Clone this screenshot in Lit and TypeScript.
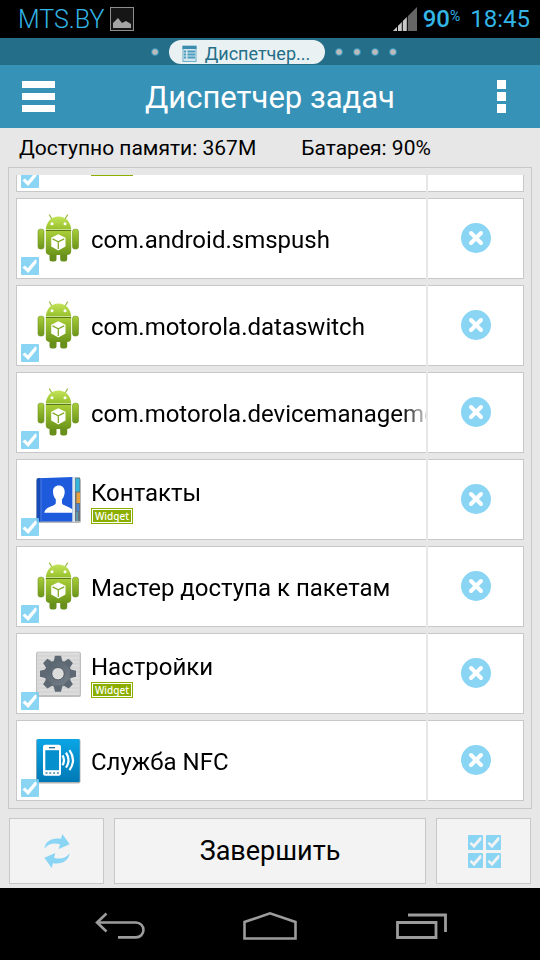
import { LitElement, html, css, svg, nothing } from "lit";
import { customElement, property, state } from "lit/decorators.js";

type IconName = "android" | "contacts" | "settings" | "nfc" | "none";

interface Task {
  name: string;
  icon: IconName;
  widget?: boolean;
}

const TASKS: Task[] = [
  { name: "", icon: "none", widget: true },
  { name: "com.android.smspush", icon: "android" },
  { name: "com.motorola.dataswitch", icon: "android" },
  { name: "com.motorola.devicemanagement", icon: "android" },
  { name: "Контакты", icon: "contacts", widget: true },
  { name: "Мастер доступа к пакетам", icon: "android" },
  { name: "Настройки", icon: "settings", widget: true },
  { name: "Служба NFC", icon: "nfc" },
];

const android = svg`
  <defs>
    <linearGradient id="g" x1="0" y1="0" x2="0" y2="1">
      <stop offset="0" stop-color="#a9ce38"/><stop offset="1" stop-color="#6c951a"/>
    </linearGradient>
    <linearGradient id="h" x1="0" y1="0" x2="0" y2="1">
      <stop offset="0" stop-color="#c3e45a"/><stop offset="1" stop-color="#96c02a"/>
    </linearGradient>
  </defs>
  <path d="M15.5 1l3 5M33.500 1l-3 5" stroke="#98b944" stroke-width="1.3" stroke-linecap="round"/>
  <path d="M11.8 15.6C12.3 7.5 17.5 2.4 24.5 2.4S36.7 7.5 37.2 15.6Z" fill="url(#h)"/>
  <circle cx="18" cy="9.8" r="1.5" fill="#fff"/><circle cx="31" cy="9.8" r="1.5" fill="#fff"/>
  <rect x="15.5" y="37" width="7" height="10.5" rx="2.5" fill="#688e1b"/>
  <rect x="26.2" y="37" width="7" height="10.5" rx="2.5" fill="#688e1b"/>
  <rect x="4" y="15.2" width="6" height="19.8" rx="2.2" fill="url(#g)" stroke="#6c9120" stroke-width=".6"/>
  <rect x="38.5" y="15.2" width="6" height="19.8" rx="2.2" fill="url(#g)" stroke="#6c9120" stroke-width=".6"/>
  <path d="M11.8 17H37.2V37Q37.2 41 33 41H16Q11.8 41 11.8 37Z" fill="url(#g)"/>
  <path d="M11.8 16.5H37.2" stroke="#587a12" stroke-width="1"/>
  <path d="M24.3 20.3L31.5 23.8V32.5L24.3 36.5L17.2 32.5V23.8Z" fill="#fff"/>
  <path d="M18.5 24.8L24.3 27.8L30.2 24.8M24.3 27.8V35" fill="none" stroke="#84aa28" stroke-width="1.3"/>`;

const contacts = svg`
  <rect x="2" y="3" width="45" height="45" rx="2" fill="#000" opacity=".28"/>
  <rect x="40" y="2.5" width="6" height="43.5" fill="#66717c"/>
  <rect x="41.5" y="3.5" width="4" height="13" fill="#35b5dc"/>
  <rect x="42.5" y="17.5" width="3.5" height="10.5" fill="#e8a13c"/>
  <rect x="42.5" y="29" width="2.5" height="7" fill="#4c86d8"/>
  <path d="M43 37v9" stroke="#5ec3e0" stroke-width="1"/>
  <rect x="38" y="1.8" width="3" height="45" fill="#dfe6ea"/>
  <path d="M4.5 3.3L38.3 2V46.5H4.5Q2.7 46.5 2.7 44.7V5.2Q2.7 3.3 4.5 3.3Z" fill="#1d5bdc"/>
  <path d="M2.9 5Q3 3.5 4.5 3.3H6.5V46.5H4.5Q3 46.5 2.9 45Z" fill="#164bb8"/>
  <path d="M7 3.5V46.3" stroke="#5c8bea" stroke-width=".7"/>
  <path d="M24.8 10.6C21 10.6 18.8 13.3 19 17C19.2 20.5 20.3 22.5 21.8 24.3V28.2C20.5 31.5 11 31.5 10.3 37.8H38.3V34.5C36 31.5 29 30.8 28 28.2V24.3C29.5 22.5 30.6 20.5 30.7 17C30.8 13.3 28.5 10.6 24.8 10.6Z" fill="#fff"/>`;

const settings = svg`
  <defs><linearGradient id="s" x1="0" y1="0" x2="1" y2="1">
    <stop offset="0" stop-color="#53606c"/><stop offset="1" stop-color="#78818b"/>
  </linearGradient></defs>
  <rect x="2" y="3" width="45" height="45" rx="2" fill="#000" opacity=".25"/>
  <rect x="2.7" y="3" width="43.5" height="43.5" rx="1.5" fill="#dcdcdc" stroke="#b5b5b5" stroke-width=".6"/>
  <path d="M3 7h43M3 11h43M3 15h43M3 19h43M3 23h43M3 27h43M3 31h43M3 35h43M3 39h43M3 43h43" stroke="#cfcfcf" stroke-width="1"/>
  <g fill="url(#s)">
    <circle cx="24" cy="24.7" r="13.5"/>
    ${[0, 45, 90, 135, 180, 225, 270, 315].map(
      (a) => svg`<path d="M19.5 13L21 6.7H27L28.5 13Z" fill="#5d6873" transform="rotate(${a} 24 24.7)"/>`
    )}
  </g>
  <circle cx="24" cy="24.7" r="6.2" fill="#dcdcdc" stroke="#464e58" stroke-width=".8"/>`;

const nfc = svg`
  <defs><linearGradient id="n" x1="0" y1="0" x2="0" y2="1">
    <stop offset="0" stop-color="#0aa5e6"/><stop offset="1" stop-color="#0079b5"/>
  </linearGradient></defs>
  <rect x="2" y="3" width="44.5" height="44.5" rx="2" fill="#000" opacity=".3"/>
  <rect x="2.7" y="3" width="43" height="43" rx="1.5" fill="url(#n)"/>
  <rect x="9" y="8.7" width="18" height="31" rx="2.2" fill="#fff"/>
  <rect x="11.3" y="14.2" width="13.7" height="20" fill="#0590cd"/>
  <path d="M15 11.7h6" stroke="#0a5f8a" stroke-width="1.2"/>
  <path d="M11.5 37h13.5" stroke="#4a88a8" stroke-width="1.5" stroke-dasharray="2 1.8"/>
  <path d="M28.5 19.4Q31.5 24.2 28.5 29.2M32 16.7Q37 24.2 32 31.7M35.5 14.2Q42.5 24.2 35.5 34.2" fill="none" stroke="#fff" stroke-width="2.2"/>`;

const ICONS = { android, contacts, settings, nfc, none: nothing };

@customElement("task-row")
export class TaskRow extends LitElement {
  @property({ attribute: false }) task!: Task;

  static styles = css`
    :host {
      display: grid;
      grid-template-columns: 1fr 2px 96px;
      flex: none;
      height: 81px;
    }
    .main {
      position: relative;
      display: flex;
      align-items: center;
      min-width: 0;
      box-sizing: border-box;
      padding: 0 0 2px 17px;
      border: 1px solid #c8c8c8;
      border-right: none;
      background: #fff;
    }
    .icon {
      flex: none;
      width: 48px;
      height: 48px;
      margin-right: 9px;
    }
    .text {
      flex: 1;
      min-width: 0;
      padding-top: 6px;
      cursor: pointer;
    }
    .name {
      display: block;
      min-height: 29px;
      overflow: hidden;
      font-size: 24px;
      line-height: 29px;
      white-space: nowrap;
      mask-image: linear-gradient(to left, rgba(0, 0, 0, 0.2), #000 24px);
    }
    .badge {
      display: block;
      box-sizing: border-box;
      width: 42px;
      height: 16px;
      border: 1px solid #8bae00;
      outline: 1px solid #fff;
      outline-offset: -2px;
      background: #8bae00;
      color: #fff;
      font: 500 10px/14px "Noto Sans", sans-serif;
      text-align: center;
    }
    .check {
      position: absolute;
      left: 4px;
      bottom: 3px;
      width: 18px;
      height: 18px;
      margin: 0;
      appearance: none;
      border-radius: 1px;
      background: rgba(119, 206, 242, 0.86);
    }
    .check:checked::before {
      content: "";
      display: block;
      width: 18px;
      height: 18px;
      background: #fff;
      clip-path: polygon(8% 58%, 22% 47%, 37% 62%, 79% 14%, 86% 16%, 86% 34%, 40% 89%);
    }
    .close {
      display: flex;
      align-items: center;
      justify-content: center;
      padding: 0 0 2px;
      border: 1px solid #c8c8c8;
      border-left: none;
      background: #fff;
    }
  `;

  render() {
    const { name, icon, widget } = this.task;
    return html`
      <div class="main">
        <svg class="icon" viewBox="0 0 48 48" fill="none">${ICONS[icon]}</svg>
        <label class="text" for="check">
          <span class="name">${name}</span>
          ${widget ? html`<span class="badge">Widget</span>` : nothing}
        </label>
        <input class="check" id="check" type="checkbox" checked />
      </div>
      <span></span>
      <button class="close" aria-label="Закрыть">
        <svg width="30" height="30" viewBox="0 0 30 30">
          <circle cx="15" cy="15" r="15" fill="#8ad5f4" />
          <path d="M10 10l10 10M20 10l-10 10" stroke="#fff" stroke-width="4" stroke-linecap="round" />
        </svg>
      </button>
    `;
  }
}

@customElement("app-root")
export class AppRoot extends LitElement {
  @state() private tasks = TASKS;

  static styles = css`
    :host {
      display: flex;
      flex-direction: column;
      height: 100vh;
      background: #e7e7e7;
      color: #000;
      font-family: Roboto, sans-serif;
    }
    button {
      padding: 0;
      border: none;
      background: none;
      color: inherit;
      font-family: inherit;
    }
    svg {
      display: block;
    }
    .status {
      display: flex;
      flex: none;
      align-items: center;
      height: 38px;
      padding: 0 10px 0 18px;
      background: #000;
      color: #33b5e5;
      font-size: 24px;
    }
    .carrier {
      margin-right: auto;
      display: flex;
      align-items: center;
      gap: 6px;
      font-size: 25px;
      font-weight: 300;
    }
    .percent {
      display: flex;
      align-items: center;
      margin: 0 10px 0 6px;
      font-weight: 500;
    }
    .percent small {
      margin-bottom: 6px;
      font-size: 14px;
      font-weight: 400;
    }
    .tabs {
      display: flex;
      flex: none;
      align-items: center;
      justify-content: center;
      gap: 10px;
      height: 27px;
      padding-left: 8px;
      background: #246e89;
    }
    .dot {
      box-sizing: border-box;
      width: 8px;
      height: 8px;
      border: 1px solid #2592bd;
      border-radius: 50%;
      background: #bbb;
    }
    .pill {
      display: flex;
      align-items: center;
      justify-content: center;
      gap: 8px;
      box-sizing: border-box;
      width: 156px;
      height: 24px;
      padding: 3px 2px 0 0;
      border-radius: 12px;
      background: #e9f1f3;
      color: #246e89;
      font-size: 18px;
      line-height: 21px;
    }
    .header {
      display: grid;
      flex: none;
      grid-template-columns: 1fr auto 1fr;
      align-items: center;
      height: 63px;
      padding: 0 34px 0 22px;
      background: #3792b7;
      color: #fff;
    }
    .more {
      justify-self: end;
    }
    .title {
      margin: 0;
      padding: 2px 0 0 12px;
      font-size: 31px;
      font-weight: 400;
    }
    .info {
      display: flex;
      flex: none;
      align-items: center;
      gap: 45px;
      height: 39px;
      padding: 0 19px;
      font-size: 21px;
    }
    .frame {
      display: flex;
      flex: 1;
      min-height: 0;
      margin: 0 8px;
      padding: 7px;
      border: 1px solid #c8c8c8;
    }
    .list {
      display: flex;
      flex: 1;
      flex-direction: column;
      justify-content: flex-end;
      gap: 6px;
      min-width: 0;
      overflow: hidden;
    }
    .actions {
      display: grid;
      flex: none;
      grid-template-columns: 95px 1fr 95px;
      gap: 10px;
      height: 66px;
      padding: 9px 9px 4px;
    }
    .action {
      display: flex;
      align-items: center;
      justify-content: center;
      border: 1px solid #c8c8c8;
      background: #f3f3f3;
      font-size: 27px;
      line-height: 34px;
    }
    .nav {
      display: grid;
      flex: none;
      grid-template-columns: repeat(3, 1fr);
      height: 72px;
      padding: 0 45px;
      background: #000;
    }
    .key {
      display: flex;
      align-items: center;
      justify-content: center;
      padding-top: 3px;
    }
  `;

  render() {
    return html`
      <div class="status">
        <span class="carrier">MTS.BY
          <svg width="24" height="24" viewBox="0 0 24 24">
            <rect x="0.5" y="0.5" width="23" height="23" fill="#161616" stroke="#8e8e8e" />
            <path d="M3 21V16L8 11L12 16L16 14L21 17V21Z" fill="#a5a5a5" />
          </svg>
        </span>
        <svg width="24" height="24" viewBox="0 0 24 24">
          <path d="M0 24L24 0V24Z" fill="#666" />
          <path d="M0 24L14 10V24Z" fill="#c8c8c8" />
          <path d="M4.5 18v6M9.3 13v11M14.3 8v16" stroke="#000" stroke-width="1" />
        </svg>
        <span class="percent">90<small>%</small></span>
        <span>18:45</span>
      </div>

      <div class="tabs">
        <span class="dot"></span>
        <span class="pill">
          <svg width="15" height="17" viewBox="0 0 15 17">
            <rect x="1" y="1" width="13" height="15.5" fill="#d3e6ee" stroke="#6db0ca" />
            <path d="M.5 2.5h14" stroke="#3b8db0" stroke-width="3" />
            <path d="M2 6.5h2M2 9.5h2M2 12.5h2M5.5 6.5h7.5M5.5 9.5h7.5M5.5 12.5h7.5" stroke="#4a9bbc" stroke-width="2" />
          </svg>
          Диспетчер...
        </span>
        ${[1, 2, 3, 4].map(() => html`<span class="dot"></span>`)}
      </div>

      <header class="header">
        <button aria-label="Меню">
          <svg width="33" height="31" viewBox="0 0 33 31" fill="#fff">
            <path d="M0 0h33v7H0zM0 12h33v7H0zM0 24h33v7H0z" />
          </svg>
        </button>
        <h1 class="title">Диспетчер задач</h1>
        <button class="more" aria-label="Ещё">
          <svg width="9" height="33" viewBox="0 0 9 33" fill="#fff">
            <path d="M0 0h9v9H0zM0 12h9v9H0zM0 24h9v9H0z" />
          </svg>
        </button>
      </header>

      <div class="info"><span>Доступно памяти: 367M</span><span>Батарея: 90%</span></div>

      <main class="frame">
        <div class="list">${this.tasks.map((t) => html`<task-row .task=${t}></task-row>`)}</div>
      </main>

      <div class="actions">
        <button class="action" aria-label="Обновить">
          <svg width="26" height="34" viewBox="0 0 26 34" fill="#8ad5f4">
            <path d="M.3 14.7C1.5 7 8 3.3 17 4.8L18.3 0L25.7 10.3L14.7 15L16 10.3C10 8.3 4 9.5 .3 14.7Z" />
            <path transform="rotate(180 13 17)" d="M.3 14.7C1.5 7 8 3.3 17 4.8L18.3 0L25.7 10.3L14.7 15L16 10.3C10 8.3 4 9.5 .3 14.7Z" />
          </svg>
        </button>
        <button class="action">Завершить</button>
        <button class="action" aria-label="Выбрать все">
          <svg width="34" height="33" viewBox="0 0 34 33">
            ${[[1, 0], [19, 0], [1, 18], [19, 18]].map(
              ([x, y]) => svg`<g transform="translate(${x} ${y})">
                <rect width="15" height="15" rx="1" fill="#8ad5f4"/>
                <path d="M1.5 8.5L3.5 7L5.7 9.3L12 2L13.3 2.2V5L6 13.3Z" fill="#f3f3f3"/>
              </g>`
            )}
          </svg>
        </button>
      </div>

      <nav class="nav">
        <button class="key" aria-label="Назад">
          <svg width="52" height="28" viewBox="0 0 52 28" fill="none" stroke="#9c9c9c" stroke-width="2.6">
            <path d="M12.5 1.5L3 10.5L12.5 19.5M3 10.5H42A7.4 7.4 0 0 1 42 25.4H24" />
          </svg>
        </button>
        <button class="key" aria-label="Домой">
          <svg width="56" height="30" viewBox="0 0 56 30" fill="none" stroke="#9c9c9c" stroke-width="2.6">
            <path d="M2.5 27.5V11L28 2.3L53.5 11V27.5Z" />
          </svg>
        </button>
        <button class="key" aria-label="Недавние">
          <svg width="54" height="28" viewBox="0 0 54 28" fill="none" stroke="#9c9c9c" stroke-width="2.8">
            <path d="M4.5 10.5H43V25.5H4.5ZM15 3H52.5V20" />
          </svg>
        </button>
      </nav>
    `;
  }
}
